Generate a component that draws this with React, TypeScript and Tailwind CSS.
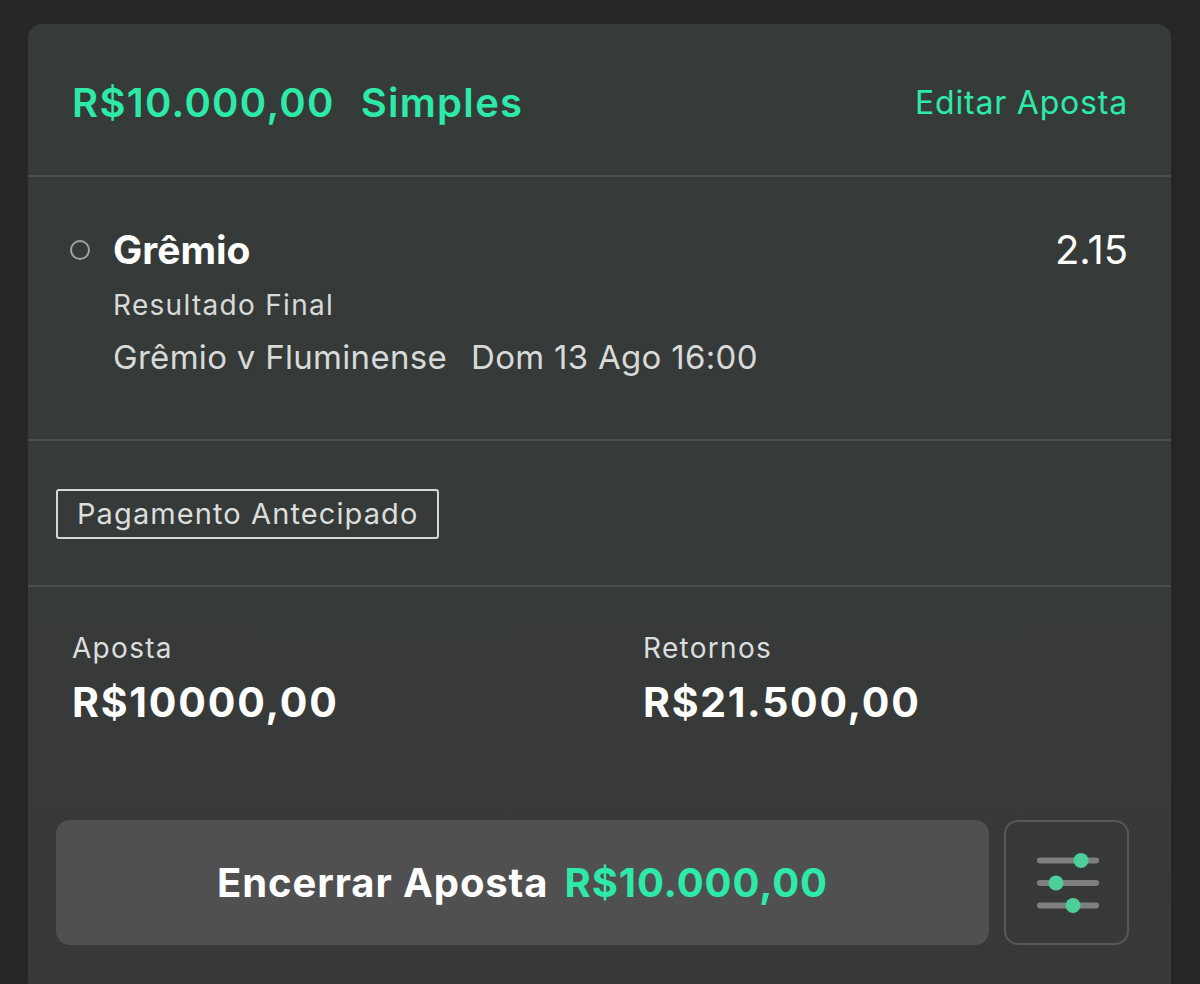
import React from 'react';

const SlidersIcon: React.FC = () => (
  <svg width="62" height="60" viewBox="0 0 62 60" fill="none" className="ml-[3px]">
    <line x1="3" y1="7.5" x2="59" y2="7.5" stroke="#7f7f7f" strokeWidth="6" strokeLinecap="round" />
    <line x1="3" y1="30" x2="59" y2="30" stroke="#7f7f7f" strokeWidth="6" strokeLinecap="round" />
    <line x1="3" y1="52.5" x2="59" y2="52.5" stroke="#7f7f7f" strokeWidth="6" strokeLinecap="round" />
    <circle cx="44" cy="7.5" r="7.5" fill="#4ccf9b" />
    <circle cx="19" cy="30" r="7.5" fill="#4ccf9b" />
    <circle cx="36" cy="52.5" r="7.5" fill="#4ccf9b" />
  </svg>
);

export default function App() {
  return (
    <div
      className="w-[1200px] h-[984px] overflow-hidden bg-[#262626] pt-[24px] pl-[28px]"
      style={{ fontFamily: 'Inter, "Noto Sans", sans-serif' }}
    >
      <div className="w-[1143px] h-[1000px] rounded-t-[14px] bg-gradient-to-b from-[#353b39] to-[#373938]">
        {/* Header */}
        <div className="h-[153px] flex items-center justify-between pt-[7px] pl-[44px] pr-[43px] border-b-2 border-[#4b504f]">
          <div className="flex items-baseline gap-[26px] text-[40px] font-semibold text-[#2eeaa9] tracking-[1.3px]">
            <span>R$10.000,00</span>
            <span>Simples</span>
          </div>
          <span className="text-[32px] text-[#2eeaa9] tracking-[0.8px]">Editar Aposta</span>
        </div>

        {/* Selection */}
        <div className="h-[264px] pt-[46px] pl-[42px] pr-[43px] border-b-2 border-[#4b504f]">
          <div className="flex items-center justify-between">
            <div className="flex items-center gap-[23px]">
              <span className="w-[20px] h-[20px] rounded-full border-[2.5px] border-[#a0a3a2]" />
              <span className="text-[39px] font-bold text-white leading-[54px]">Grêmio</span>
            </div>
            <span className="text-[40px] text-white leading-[54px]">2.15</span>
          </div>
          <div className="pl-[43px] text-[28px] text-[#d8dada] tracking-[1.3px] leading-[52px] mt-[2px]">Resultado Final</div>
          <div className="pl-[43px] text-[33px] text-[#d8dada] tracking-[0.3px] leading-[52px] flex gap-[24px]">
            <span>Grêmio v Fluminense</span>
            <span>Dom 13 Ago 16:00</span>
          </div>
        </div>

        {/* Tag */}
        <div className="h-[146px] flex items-center pl-[28px] pt-[2px] border-b-2 border-[#4b504f]">
          <span className="h-[50px] px-[19px] flex items-center border-2 border-[#d6d8d7] rounded-[3px] text-[29px] text-[#dcdede] tracking-[1.1px]">
            Pagamento Antecipado
          </span>
        </div>

        {/* Stake / returns */}
        <div className="pt-[44px] pl-[44px] flex">
          <div className="w-[571px]">
            <div className="text-[28px] text-[#dcdede] tracking-[1.3px] leading-[34px]">Aposta</div>
            <div className="text-[41px] font-bold text-white tracking-[1.8px] leading-[56px] mt-[9px]">R$10000,00</div>
          </div>
          <div>
            <div className="text-[28px] text-[#dcdede] tracking-[1.3px] leading-[34px]">Retornos</div>
            <div className="text-[41px] font-bold text-white tracking-[1.7px] leading-[56px] mt-[9px]">R$21.500,00</div>
          </div>
        </div>

        {/* Actions */}
        <div className="mt-[90px] pl-[28px] flex gap-[15px]">
          <button className="w-[933px] h-[125px] rounded-[14px] bg-[#505050] flex items-center justify-center gap-[16px] text-[40px] font-bold tracking-[0.9px]">
            <span className="text-white">Encerrar Aposta</span>
            <span className="text-[#2eeaa9]">R$10.000,00</span>
          </button>
          <button className="w-[125px] h-[125px] rounded-[14px] border-2 border-[#575757] flex items-center justify-center">
            <SlidersIcon />
          </button>
        </div>
      </div>
    </div>
  );
}
